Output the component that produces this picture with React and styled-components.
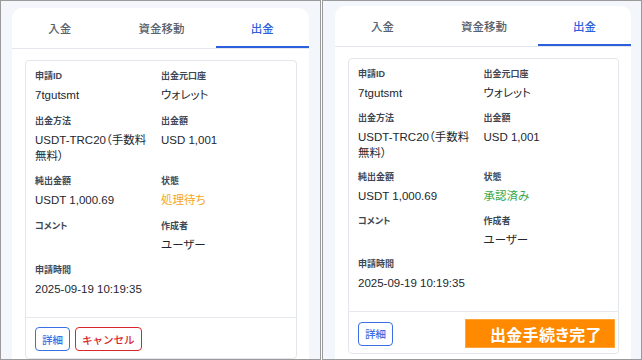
import React from "react"
import styled, { createGlobalStyle } from "styled-components"

const GlobalStyle = createGlobalStyle`
  html, body {
    margin: 0;
    padding: 0;
    background: #ffffff;
  }
  body {
    font-family: "Liberation Sans", "Noto Sans CJK JP", sans-serif;
    font-feature-settings: "palt";
  }
  * {
    box-sizing: border-box;
  }
`

const rows = [
  [
    { label: "申請ID", value: "7tgutsmt" },
    { label: "出金元口座", value: "ウォレット" },
  ],
  [
    { label: "出金方法", value: "USDT-TRC20（手数料無料）" },
    { label: "出金額", value: "USD 1,001" },
  ],
  [
    { label: "純出金額", value: "USDT 1,000.69" },
    { label: "状態", status: true },
  ],
  [
    { label: "コメント", value: "" },
    { label: "作成者", value: "ユーザー" },
  ],
  [{ label: "申請時間", value: "2025-09-19 10:19:35" }],
]

function Screen({ done, width, pad, rowGap, gridTop }) {
  return (
    <Phone $w={width} $pad={pad}>
      <Card>
        <Tabs>
          <Tab>入金</Tab>
          <Tab>資金移動</Tab>
          <Tab $active>出金</Tab>
        </Tabs>
        <Body>
          <Record>
            <Fields $rowGap={rowGap} $top={gridTop}>
              {rows.flat().map((f) => (
                <Field key={f.label}>
                  <Label>{f.label}</Label>
                  {f.status ? (
                    <Value $tone={done ? "green" : "orange"}>
                      {done ? "承認済み" : "処理待ち"}
                    </Value>
                  ) : (
                    <Value>{f.value || "\u00a0"}</Value>
                  )}
                </Field>
              ))}
            </Fields>
            <Footer $done={done}>
              <OutlineButton $tone="blue">詳細</OutlineButton>
              {done ? (
                <CompleteButton>出金手続き完了</CompleteButton>
              ) : (
                <OutlineButton $tone="red">キャンセル</OutlineButton>
              )}
            </Footer>
          </Record>
        </Body>
      </Card>
    </Phone>
  )
}

export default function App() {
  return (
    <>
      <GlobalStyle />
      <Frame>
        <Screen width={321} pad="7px 11px 0 11px" rowGap={10.5} gridTop={8} />
        <Screen
          done
          width={320}
          pad="5px 10px 0 12px"
          rowGap={9.5}
          gridTop={8}
        />
      </Frame>
    </>
  )
}

const Frame = styled.div`
  display: flex;
  gap: 1px;
  width: 642px;
  height: 360px;
  overflow: hidden;
`

const Phone = styled.div`
  width: ${(p) => p.$w}px;
  height: 360px;
  flex-shrink: 0;
  border: 1px solid #9a9a9a;
  background: #f3f6fa;
  padding: ${(p) => p.$pad};
  overflow: hidden;
`

const Card = styled.div`
  background: #ffffff;
  border-radius: 10px 10px 0 0;
  min-height: 400px;
`

const Tabs = styled.div`
  display: grid;
  grid-template-columns: 95fr 108fr 93fr;
  height: 41px;
  border-bottom: 1px solid #e4e8ee;
`

const Tab = styled.div`
  display: flex;
  align-items: center;
  justify-content: center;
  height: 40px;
  font-size: 11.5px;
  font-weight: 500;
  color: ${(p) => (p.$active ? "#2c5fdc" : "#59616c")};
  box-shadow: ${(p) => (p.$active ? "inset 0 -2px 0 #2c5fdc" : "none")};
`

const Body = styled.div`
  padding: 11px 12px 12px 13px;
`

const Record = styled.div`
  border: 1px solid #e3e6ea;
  border-radius: 4px;
`

const Fields = styled.div`
  display: grid;
  grid-template-columns: 1fr 1fr;
  row-gap: ${(p) => p.$rowGap}px;
  padding: ${(p) => p.$top}px 9px 20px 9px;
  border-bottom: 1px solid #e6e9ed;
`

const Field = styled.div`
  display: flex;
  flex-direction: column;
  gap: 4px;
  padding-right: 4px;
`

const Label = styled.div`
  font-size: 9px;
  line-height: 14px;
  font-weight: 700;
  color: #3e4855;
`

const tones = {
  orange: "#f5a623",
  green: "#3aa84a",
}

const Value = styled.div`
  font-size: 11.5px;
  line-height: 16px;
  color: ${(p) => tones[p.$tone] || "#22272e"};
`

const Footer = styled.div`
  display: flex;
  align-items: center;
  gap: 5px;
  padding: ${(p) => (p.$done ? "7px 9px 5px 9px" : "9px 9px 7px 9px")};
`

const OutlineButton = styled.button`
  height: 24px;
  padding: 0 6px;
  background: #ffffff;
  border: 1px solid ${(p) => (p.$tone === "red" ? "#d9262c" : "#3b6fe6")};
  border-radius: 4px;
  color: ${(p) => (p.$tone === "red" ? "#d9262c" : "#3b6fe6")};
  font-family: inherit;
  font-size: 10.5px;
  font-weight: 500;
`

const CompleteButton = styled.div`
  margin-left: auto;
  margin-right: -6px;
  width: 150px;
  height: 29px;
  display: flex;
  align-items: center;
  padding-left: 24px;
  background: #ff8a00;
  border: 1px solid #ffa53a;
  color: #ffffff;
  font-size: 16px;
  font-weight: 700;
  letter-spacing: 0.3px;
`
